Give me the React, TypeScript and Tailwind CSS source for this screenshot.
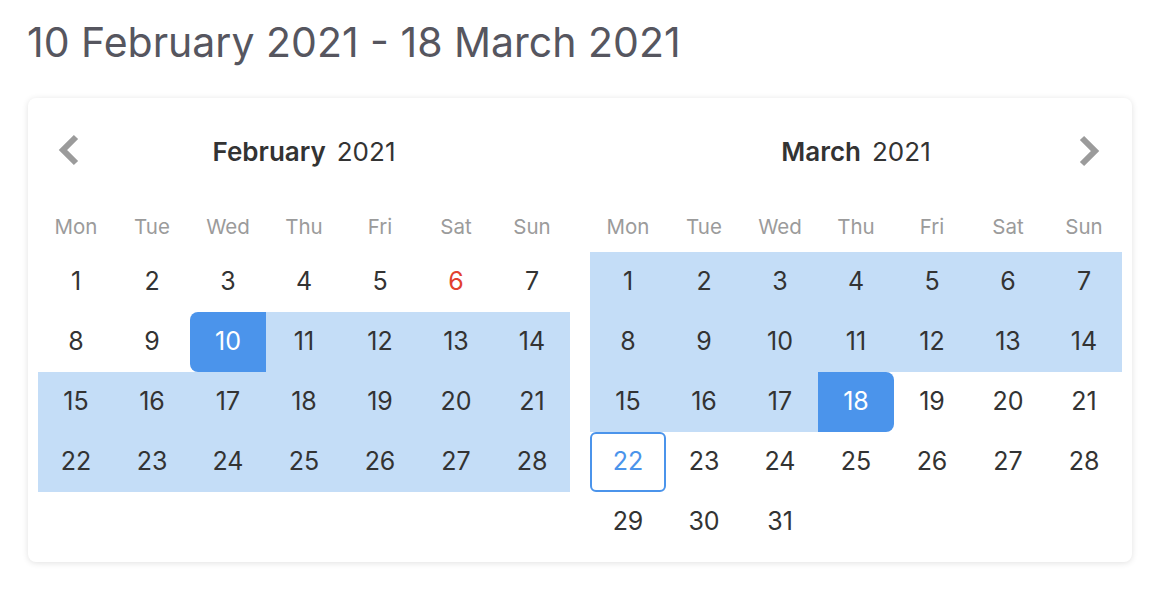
import React from "react";

const WEEKDAYS = ["Mon", "Tue", "Wed", "Thu", "Fri", "Sat", "Sun"];

type Month = {
  name: string;
  year: number;
  days: number;
  // day-of-month range shown in light blue (inclusive)
  rangeFrom: number;
  rangeTo: number;
  start?: number;
  end?: number;
  today?: number;
  holiday?: number;
  nav: "prev" | "next";
};

const months: Month[] = [
  { name: "February", year: 2021, days: 28, rangeFrom: 10, rangeTo: 28, start: 10, holiday: 6, nav: "prev" },
  { name: "March", year: 2021, days: 31, rangeFrom: 1, rangeTo: 18, end: 18, today: 22, nav: "next" },
];

function Chevron({ dir }: { dir: "prev" | "next" }) {
  return (
    <svg width="24" height="32" viewBox="0 0 24 32" fill="none">
      <polyline
        points={dir === "prev" ? "20,3 7,16 20,29" : "4,3 17,16 4,29"}
        stroke="#9b9b9b"
        strokeWidth="6"
      />
    </svg>
  );
}

function DayCell({ day, m }: { day: number; m: Month }) {
  const inRange = day >= m.rangeFrom && day <= m.rangeTo;
  const isStart = day === m.start;
  const isEnd = day === m.end;
  const isToday = day === m.today;

  let cls = "flex h-[60px] w-[76px] items-center justify-center text-[25px]";
  if (isStart) cls += " bg-[#4b94eb] text-white rounded-l-[8px]";
  else if (isEnd) cls += " bg-[#4b94eb] text-white rounded-r-[8px]";
  else if (isToday) cls += " rounded-[6px] border-2 border-[#4b94eb] text-[#4b94eb]";
  else if (day === m.holiday) cls += " text-[#e2412f]";
  else cls += inRange ? " bg-[#c4ddf7] text-[#333333]" : " text-[#333333]";

  return <div className={cls}>{day}</div>;
}

function MonthView({ m }: { m: Month }) {
  const days = Array.from({ length: m.days }, (_, i) => i + 1);
  return (
    <div className="w-[532px]">
      <div className="relative flex h-[86px] items-center justify-center text-[26px] text-[#333333]">
        <div className={m.nav === "prev" ? "absolute left-[18px] top-[26px]" : "absolute right-[20px] top-[27px]"}>
          <Chevron dir={m.nav} />
        </div>
        <span className="font-semibold">{m.name}</span>
        <span className="ml-[11px]">{m.year}</span>
      </div>
      <div className="grid h-[58px] grid-cols-7 pt-[9px]">
        {WEEKDAYS.map((w) => (
          <div key={w} className="flex items-center justify-center text-[20.5px] text-[#9b9b9b]">
            {w}
          </div>
        ))}
      </div>
      <div className="grid grid-cols-7">
        {days.map((d) => (
          <DayCell key={d} day={d} m={m} />
        ))}
      </div>
    </div>
  );
}

export default function App() {
  return (
    <div
      className="h-[590px] w-[1172px] bg-white px-[28px] pt-[18px]"
      style={{ fontFamily: "Inter, 'Noto Sans', sans-serif" }}
    >
      <h1 className="ml-[-1px] text-[41px] leading-[48px] text-[#56565f]">
        10 February 2021 - 18 March 2021
      </h1>
      <div className="mt-[32px] flex w-[1104px] gap-[20px] rounded-[8px] bg-white p-[10px] shadow-[0_1px_6px_rgba(0,0,0,0.12)]">
        {months.map((m) => (
          <MonthView key={m.name} m={m} />
        ))}
      </div>
    </div>
  );
}
